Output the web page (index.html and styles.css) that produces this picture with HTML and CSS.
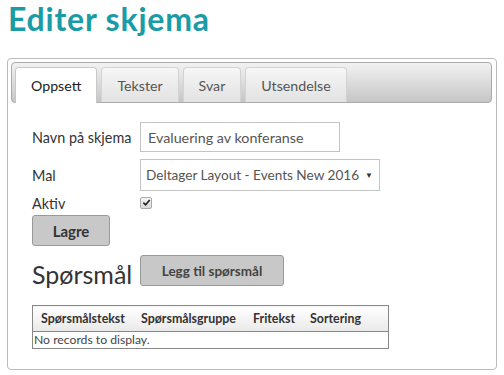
FILE: index.html
```html
<!DOCTYPE html>
<html lang="no">
<head>
  <meta charset="UTF-8">
  <meta name="viewport" content="width=device-width, initial-scale=1.0">
  <title>Editer skjema</title>
  <link rel="stylesheet" href="styles.css">
</head>
<body>
  <h1>Editer skjema</h1>

  <div class="panel">
    <ul class="tabs">
      <li class="tab active">Oppsett</li>
      <li class="tab">Tekster</li>
      <li class="tab">Svar</li>
      <li class="tab">Utsendelse</li>
    </ul>

    <div class="tab-content">
      <form class="form">
        <div class="form-row row-name">
          <label for="name">Navn på skjema</label>
          <input type="text" id="name" class="field" value="Evaluering av konferanse">
        </div>

        <div class="form-row row-template">
          <label for="template">Mal</label>
          <div class="select-wrap">
            <select id="template" class="field select">
              <option>Deltager Layout - Events New 2016</option>
            </select>
          </div>
        </div>

        <div class="form-row row-active">
          <label for="active">Aktiv</label>
          <span class="check">
            <input type="checkbox" id="active" checked>
            <svg viewBox="0 0 10 10" width="9" height="9"><path d="M1.5 5.2 L4 7.6 L8.6 2.2" fill="none" stroke="#222" stroke-width="1.8"/></svg>
          </span>
        </div>
      </form>
      <button type="button" class="btn btn-save">Lagre</button>

      <div class="questions-head">
        <h2>Spørsmål</h2>
        <button type="button" class="btn btn-add">Legg til spørsmål</button>
      </div>

      <table class="grid">
        <thead>
          <tr>
            <th class="col-text">Spørsmålstekst</th>
            <th class="col-group">Spørsmålsgruppe</th>
            <th class="col-free">Fritekst</th>
            <th>Sortering</th>
          </tr>
        </thead>
        <tbody>
          <tr><td colspan="4">No records to display.</td></tr>
        </tbody>
      </table>
    </div>
  </div>
</body>
</html>
```

FILE: styles.css
```css
body {
  margin: 0;
  padding: 0 7px;
  font-family: Lato, "Open Sans", sans-serif;
  color: #333;
  background: white;
}
h1 {
  margin: 0;
  padding: 0 0 0 1px;
  font-size: 32px;
  line-height: 38px;
  letter-spacing: 0.8px;
  font-weight: bold;
  color: #1a9ba6;
}
.panel {
  margin-top: 20px;
  height: 307px;
  border: 1px solid #bbb;
  border-radius: 4px;
  padding: 3px 4px 0 3px;
}
.tabs {
  list-style: none;
  margin: 0;
  padding: 4px 3px 0 3px;
  height: 35px;
  display: flex;
  align-items: flex-end;
  gap: 4px;
  border: 1px solid #aaa;
  border-radius: 4px;
  background: linear-gradient(#f2f2f2, #c6c6c6);
}
.tab {
  height: 34px;
  line-height: 36px;
  padding: 0 15px;
  font-size: 14.2px;
  color: #555;
  border: 1px solid #d3d3d3;
  border-bottom: none;
  border-radius: 4px 4px 0 0;
  background: linear-gradient(#f6f6f6, #e2e2e2);
}
.tab.active {
  height: 35px;
  margin-bottom: -1px;
  color: #222;
  background: white;
  border-color: #c8c8c8;
}
.tab-content {
  padding: 19px 0 0 21px;
}
.form-row {
  display: flex;
  align-items: center;
  font-size: 14.4px;
}
.form-row label {
  width: 108px;
  color: #333;
}
.row-name {
  height: 30px;
  margin-bottom: 7px;
}
.row-template {
  height: 32px;
}
.row-active {
  height: 24px;
}
.field {
  box-sizing: border-box;
  height: 30px;
  width: 200px;
  padding: 0 7px;
  border: 1px solid #c4c4c4;
  font-family: inherit;
  font-size: 14.3px;
  color: #555;
  background: white;
}
.select-wrap {
  position: relative;
  width: 240px;
}
.select-wrap::after {
  content: "\25BC";
  position: absolute;
  right: 7px;
  top: 11px;
  font-size: 8px;
  color: #333;
  pointer-events: none;
}
.select {
  appearance: none;
  width: 240px;
  height: 32px;
  padding: 0 12px 0 5px;
  font-size: 13.6px;
  border-radius: 0;
}
.check {
  position: relative;
  width: 12px;
  height: 12px;
}
.check input {
  appearance: none;
  box-sizing: border-box;
  display: block;
  margin: 0;
  width: 12px;
  height: 12px;
  border: 1px solid #aaa;
  border-radius: 2px;
  background: linear-gradient(#f4f4f4, #d8d8d8);
}
.check svg {
  position: absolute;
  left: 2px;
  top: 1px;
  pointer-events: none;
}
.btn {
  box-sizing: border-box;
  border: 1px solid #999;
  border-radius: 3px;
  background: #c8c8c8;
  color: #333;
  font-family: inherit;
  cursor: pointer;
}
.btn-save {
  display: block;
  width: 78px;
  height: 31px;
  font-size: 15px;
  font-weight: bold;
}
.questions-head {
  display: flex;
  align-items: flex-start;
  height: 31px;
  margin-top: 9px;
}
h2 {
  margin: 0;
  width: 108px;
  font-size: 25px;
  font-weight: normal;
  line-height: 38px;
  color: #333;
}
.btn-add {
  width: 144px;
  height: 31px;
  font-size: 13.5px;
  font-weight: bold;
  color: #444;
}
.grid {
  margin-top: 19px;
  width: 357px;
  border-collapse: collapse;
  border: 1px solid #888;
  table-layout: fixed;
}
.grid th {
  height: 25px;
  padding: 0 0 0 8px;
  text-align: left;
  font-size: 12.4px;
  font-weight: bold;
  color: #333;
  white-space: nowrap;
  background: linear-gradient(white, #e9e9e9);
  border-bottom: 1px solid #888;
}
.grid .col-text {
  width: 92px;
}
.grid .col-group {
  width: 104px;
}
.grid .col-free {
  width: 49px;
}
.grid td {
  height: 16px;
  padding: 0 0 0 1px;
  font-size: 12.2px;
  color: #444;
  line-height: 16px;
}
```
